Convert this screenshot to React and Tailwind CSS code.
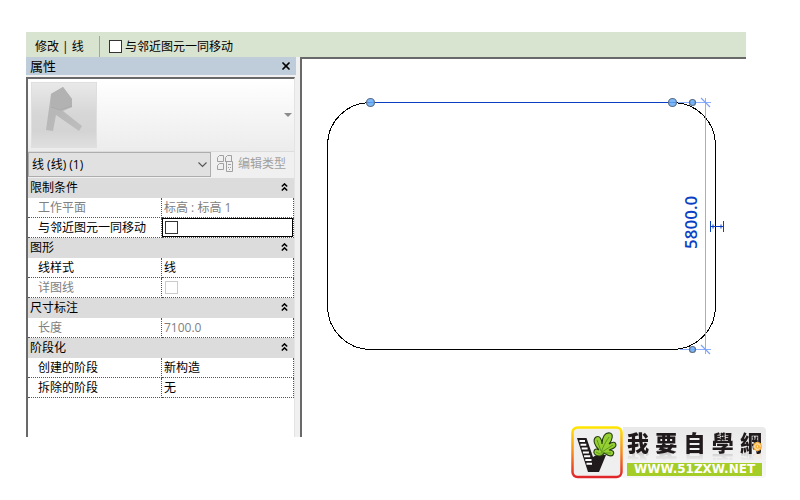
import React from "react";
import { X } from "lucide-react";

const groups = [
  {
    title: "限制条件",
    rows: [
      { label: "工作平面", value: "标高 : 标高 1", disabled: true },
      { label: "与邻近图元一同移动", check: true, active: true },
    ],
  },
  {
    title: "图形",
    rows: [
      { label: "线样式", value: "线" },
      { label: "详图线", check: true, disabled: true },
    ],
  },
  {
    title: "尺寸标注",
    rows: [{ label: "长度", value: "7100.0", disabled: true }],
  },
  {
    title: "阶段化",
    rows: [
      { label: "创建的阶段", value: "新构造" },
      { label: "拆除的阶段", value: "无" },
    ],
  },
];

function OptionsBar() {
  return (
    <header className="flex h-[25px] shrink-0 items-end bg-[#d8e3d0]">
      <h1 className="h-[21px] w-[74px] border-r border-[#a3a3a3] pl-[9px] leading-[21px]">
        修改 | 线
      </h1>
      <label className="flex h-[21px] items-center gap-[3px] pl-[9px]">
        <input
          type="checkbox"
          className="size-[13px] appearance-none border border-[#333] bg-white checked:bg-[#333]"
        />
        与邻近图元一同移动
      </label>
    </header>
  );
}

function TypePreview() {
  return (
    <button
      aria-label="类型选择器"
      className="flex h-[73px] w-full items-center justify-between border-b border-[#dcdcdc] bg-linear-to-b from-white to-[#ececec] pl-[3px] pr-[2px]"
    >
      <svg width="66" height="66" viewBox="0 0 66 66">
        <defs>
          <linearGradient id="tile" x1="0" y1="0" x2="0" y2="1">
            <stop offset="0" stopColor="#e9e9e9" />
            <stop offset="0.5" stopColor="#d6d6d6" />
            <stop offset="0.75" stopColor="#d4d4d4" />
            <stop offset="1" stopColor="#dfdfdf" />
          </linearGradient>
          <linearGradient id="letter" x1="0" y1="0" x2="1" y2="1">
            <stop offset="0" stopColor="#b4b4b4" />
            <stop offset="1" stopColor="#bdbdbd" />
          </linearGradient>
        </defs>
        <rect x="0.5" y="0.5" width="65" height="65" fill="url(#tile)" stroke="#dfdfdf" />
        <path d="M20 12 32 5 41 17 41 25 32 29 51 44 48 49 25 33 22 49 15 48Z" fill="url(#letter)" />
        <path d="M20 12 32 5 41 17 41 25 29 28 20 25Z" fill="#b2b2b2" />
        <path d="M20 25 29 28 41 24" fill="none" stroke="#ababab" />
      </svg>
      <svg width="8" height="5" viewBox="0 0 8 5">
        <path d="M0 0h8L4 4z" fill="#8c8c8c" />
      </svg>
    </button>
  );
}

function TypeBar() {
  return (
    <div className="flex h-[26px] items-start bg-[#f0f0f0]">
      <div className="relative">
        <select
          aria-label="图元"
          className="h-[25px] w-[183px] appearance-none border border-[#adadad] bg-[#e1e1e1] pl-[3px] leading-[23px]"
        >
          <option>线 (线) (1)</option>
        </select>
        <svg className="pointer-events-none absolute right-1 top-2.5" width="9" height="6" viewBox="0 0 9 6">
          <path d="M0.5 0.5 4.5 4.5 8.5 0.5" fill="none" stroke="#555" strokeWidth="1.1" />
        </svg>
      </div>
      <button className="flex h-[23px] items-center gap-1 pl-[6px] text-[#a0a0a0]" disabled>
        <svg width="17" height="17" viewBox="0 0 17 17" fill="none" stroke="#a0a0a0">
          <path d="M0.5 6.5V2.5L2.5 0.5H6.5V6.5ZM8.5 6.5V2.5L10.5 0.5H14.5V6.5M0.5 14.5V10.5L2.5 8.5H6.5V14.5Z" />
          <path d="M8 6.5H15.5V16.5H9.5V7M11 9.5h3M11 12.5h1M13 12.5h1M12 14.5h1" />
        </svg>
        编辑类型
      </button>
    </div>
  );
}

function PropertyRow({ row }) {
  return (
    <tr className={row.disabled ? "h-5 text-[#808080]" : "h-5"}>
      <th
        scope="row"
        className="border-b border-r border-dotted border-[#555] pl-[10px] text-left font-normal"
      >
        {row.label}
      </th>
      <td className="border-b border-r border-dotted border-[#555]">
        <div
          className={
            row.active
              ? "flex h-[19px] items-center border border-black pl-[1px]"
              : "flex h-[19px] items-center pl-[2px]"
          }
        >
          {row.check ? (
            <input
              type="checkbox"
              aria-label={row.label}
              disabled={row.disabled}
              className="ml-px size-[13px] appearance-none border border-[#333] bg-white checked:bg-[#333] disabled:border-[#ccc]"
            />
          ) : (
            row.value
          )}
        </div>
      </td>
    </tr>
  );
}

function PropertyTable() {
  return (
    <table className="w-full table-fixed border-separate border-spacing-0 leading-[18px]">
      <colgroup>
        <col className="w-[134px]" />
        <col />
      </colgroup>
      {groups.map((group) => (
        <tbody key={group.title}>
          <tr className="h-5 bg-[#dcdcdc]">
            <th colSpan={2} className="pl-[2px] pr-[6px] font-normal">
              <div className="flex items-center justify-between">
                {group.title}
                <button aria-label={`折叠 ${group.title}`} className="pb-[3px]">
                  <svg width="7" height="8" viewBox="0 0 7 8" fill="none" stroke="#000" strokeWidth="1.5">
                    <path d="M0.8 3.5 3.5 0.9 6.2 3.5M0.8 7.5 3.5 4.9 6.2 7.5" />
                  </svg>
                </button>
              </div>
            </th>
          </tr>
          {group.rows.map((row) => (
            <PropertyRow key={row.label} row={row} />
          ))}
        </tbody>
      ))}
    </table>
  );
}

function PropertiesPanel() {
  return (
    <aside className="flex w-[274px] shrink-0 flex-col bg-[#f0f0f0]">
      <div className="mr-1 flex h-[18px] items-center justify-between bg-[#bfcddb] pl-1 pr-1 text-[13px] leading-[18px]">
        <h2>属性</h2>
        <button aria-label="关闭">
          <X size={12} strokeWidth={3.5} />
        </button>
      </div>
      <div className="mr-[5px] mt-[2px] flex-1 border-l-2 border-t-2 border-[#696969] border-r border-r-[#e3e3e3] bg-white">
        <TypePreview />
        <TypeBar />
        <PropertyTable />
      </div>
    </aside>
  );
}

function DrawingView() {
  return (
    <main className="min-w-0 flex-1 border-l-2 border-t-2 border-[#696969] bg-white">
      <svg
        className="h-full w-full"
        viewBox="302 59 444 378"
        preserveAspectRatio="xMinYMin meet"
        fill="none"
      >
        <path
          d="M370.5 102.5C347 102.5 327.5 121 327.5 145.5V306.5C327.5 330 347 349.5 370.5 349.5H672.5C696 349.5 715.5 330 715.5 306.5V145.5C715.5 121 696 102.5 672.5 102.5"
          stroke="#000"
          shapeRendering="crispEdges"
        />
        <path d="M678 102.5H711M680 349.5H711M705.5 98V354" stroke="#8cb0ff" shapeRendering="crispEdges" />
        <path d="M701 98 710 107M701 345 710 354" stroke="#7da2f5" strokeWidth="1.2" />
        <path d="M370 102.5H673" stroke="#0a41c4" />
        <g fill="#64aaf8" fillOpacity="0.85" stroke="#5d6f88" strokeWidth="1.2">
          <circle cx="370.5" cy="102.5" r="4" />
          <circle cx="672.5" cy="102.5" r="4" />
          <circle cx="692.5" cy="102.5" r="3" />
          <circle cx="692.5" cy="349.5" r="3" />
        </g>
        <path d="M710.5 221V232M723.5 221V232M711 226.5H723M713 224.5V228.5M721 224.5V228.5" stroke="#0a41c4" />
        <text
          transform="translate(697 249) rotate(-90)"
          className="fill-[#0a41c4] font-['Open_Sans',sans-serif] text-[17px] font-semibold"
        >
          5800.0
        </text>
      </svg>
    </main>
  );
}

function SiteLogo() {
  return (
    <a
      href="#home"
      aria-label="我要自學網"
      className="absolute bottom-[21px] right-[34px] flex items-center"
    >
      <svg width="52" height="53" viewBox="0 0 52 53">
        <defs>
          <linearGradient id="frame" x1="0" y1="0" x2="0" y2="1">
            <stop offset="0" stopColor="#ffe500" />
            <stop offset="0.5" stopColor="#f68b1f" />
            <stop offset="1" stopColor="#e0252b" />
          </linearGradient>
        </defs>
        <rect x="1.5" y="1.5" width="49" height="49.5" rx="5" fill="#efefef" stroke="url(#frame)" strokeWidth="2.5" />
        <path d="M6 12H15.500L22 31 27 28 35 29 28 46H17Z" fill="#211a1c" />
        <path d="M8.500 15H14M9.500 18.800H15.300M10.700 22.600H16.600M11.900 26.400H17.900M13.100 30.200H19.200M14.300 34H20.500M15.500 37.800H21" stroke="#fff" strokeWidth="2" />
        <path
          d="M29 30C25 30 22 28 23 25C24 22 26 23 28 24C24 20 21 14 25 11C29 9 31 14 31 18C31 11 34 6 39 7C43 8 41 15 38 18C42 15 45 16 45 19C45 22 41 23 38 24C42 24 44 26 42 29C40 31 36 29 33 27C32 29 31 30 29 30Z"
          fill="#95cf31"
          stroke="#253b13"
          strokeWidth="1.1"
        />
        <path d="M30 29C30 25 33 18 38 11M31 26 42 19M31 27 40 27M30 25 26 14M29 28 25 26" fill="none" stroke="#4f8a1c" strokeWidth="0.8" />
      </svg>
      <div className="flex h-[51px] w-[143px] flex-col justify-between rounded-r-sm bg-linear-to-b from-[#e9e9e9] to-[#f7f7f7] px-1 pb-[2px]">
        <div className="relative flex h-[29px] items-center justify-between font-['Noto_Sans_CJK_TC',sans-serif] text-[22px] font-black leading-[29px] text-[#211a1c] [-webkit-box-reflect:below_-8px_linear-gradient(transparent_55%,rgba(0,0,0,0.25))]">
          <span>我</span>
          <span>要</span>
          <span>自</span>
          <span>學</span>
          <span>網</span>
          <svg className="absolute bottom-[5px] right-0" width="9" height="9" viewBox="0 0 9 9" fill="none">
            <circle cx="4.5" cy="4.5" r="4.5" fill="#fbb03b" />
            <path d="M6.500 6.500A2.800 2.800 0 1 1 7.300 4.500M4.500 3.500v2" stroke="#fff" strokeWidth="0.8" />
          </svg>
        </div>
        <div className="relative h-[13px] bg-[#a5cd27] text-center font-['DejaVu_Sans',sans-serif] text-xs font-bold leading-[13px] text-white">
          WWW.51ZXW.NET
        </div>
      </div>
    </a>
  );
}

export default function App() {
  return (
    <div className="relative flex min-h-screen flex-col bg-white pb-[63px] pl-[26px] pr-[54px] pt-8 font-['Open_Sans','Noto_Sans_CJK_SC',sans-serif] text-xs text-black">
      <OptionsBar />
      <div className="flex flex-1">
        <PropertiesPanel />
        <DrawingView />
      </div>
      <SiteLogo />
    </div>
  );
}
